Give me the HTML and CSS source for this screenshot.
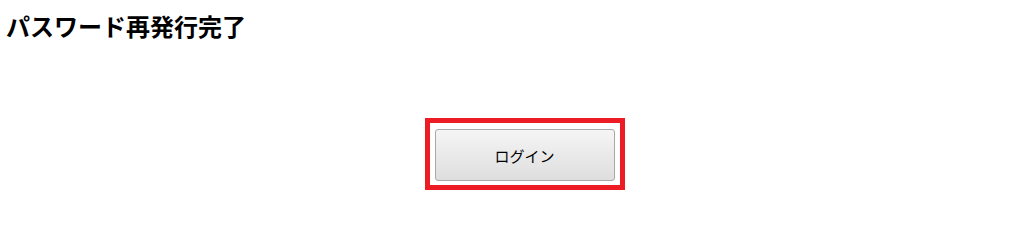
FILE: index.html
```html
<!DOCTYPE html>
<html lang="ja">
<head>
<meta charset="utf-8">
<title>パスワード再発行完了</title>
<link rel="stylesheet" href="styles.css">
</head>
<body>
<h1 class="title">パスワード再発行完了</h1>
<div class="actions">
  <div class="highlight">
    <button class="btn" type="button">ログイン</button>
  </div>
</div>
</body>
</html>
```
FILE: styles.css
```css
html, body {
  margin: 0;
  padding: 0;
  background: #fff;
}
body {
  font-family: "Noto Sans CJK JP", "Noto Sans", sans-serif;
  color: #000;
}
.title {
  margin: 0;
  padding: 11px 0 0 6px;
  font-size: 24px;
  font-weight: 700;
  line-height: 30px;
  letter-spacing: 0;
}
.actions {
  display: flex;
  justify-content: center;
  padding: 77px 0 0 39px;
}
.highlight {
  border: 5px solid #ed1c24;
  padding: 6px 5px 4px 5px;
  display: flex;
}
.btn {
  width: 180px;
  height: 52px;
  border: 1px solid #a9a9a9;
  border-radius: 3px;
  background: linear-gradient(#f5f5f5, #dedede);
  font-family: "Noto Sans CJK JP", "Noto Sans", sans-serif;
  font-size: 15px;
  color: #000;
  padding: 0;
  cursor: pointer;
}
```
